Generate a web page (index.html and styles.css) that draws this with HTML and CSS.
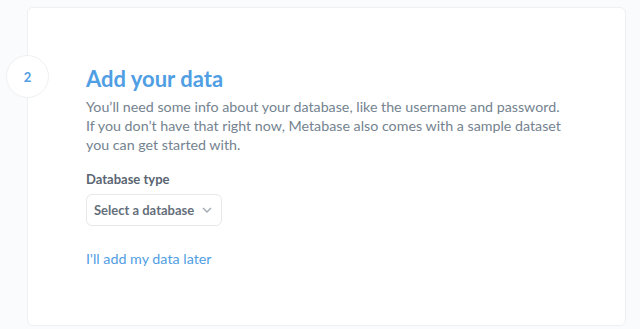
FILE: index.html
```html
<!DOCTYPE html>
<html lang="en">
<head>
    <meta charset="UTF-8">
    <meta name="viewport" content="width=device-width, initial-scale=1.0">
    <title>Add your data</title>
    <link rel="stylesheet" href="styles.css">
</head>
<body>
    <div class="step">
        <div class="step-number">2</div>
        <h2 class="step-title">Add your data</h2>
        <p class="step-text">You’ll need some info about your database, like the username and password.<br>
            If you don’t have that right now, Metabase also comes with a sample dataset<br>
            you can get started with.</p>

        <div class="form-group">
            <label class="form-label">Database type</label>
            <button class="select-btn">
                Select a database
                <svg class="chevron" width="12" height="12" viewBox="0 0 12 12">
                    <path d="M2 4 L6 8 L10 4" fill="none" stroke="#a3aab3" stroke-width="1.4"/>
                </svg>
            </button>
        </div>

        <a class="later-link" href="#">I'll add my data later</a>
    </div>
</body>
</html>
```

FILE: styles.css
```css
body{
    margin: 0;
    background-color: #f9fbfc;
    font-family: Lato, "Open Sans", sans-serif;
}
.step{
    position: relative;
    box-sizing: border-box;
    margin: 7px 14px 0 27px;
    height: 319px;
    padding: 57px 20px 0 58px;
    background-color: #fff;
    border: 1px solid #eef0f2;
    border-radius: 6px;
}
.step-number{
    position: absolute;
    left: -22px;
    top: 47px;
    box-sizing: border-box;
    width: 43px;
    height: 43px;
    border: 1px solid #eef0f2;
    border-radius: 50%;
    background-color: #fff;
    color: #509ee3;
    font-size: 13px;
    font-weight: 700;
    display: flex;
    align-items: center;
    justify-content: center;
}
.step-title{
    margin: 0;
    color: #509ee3;
    font-size: 22px;
    font-weight: 700;
    line-height: 28px;
}
.step-text{
    margin: 4px 0 0 0;
    color: #74838f;
    font-size: 14.25px;
    line-height: 19px;
}
.form-group{
    margin-top: 17px;
}
.form-label{
    display: block;
    color: #5a6572;
    font-size: 13px;
    font-weight: 700;
    margin-bottom: 7px;
}
.select-btn{
    display: flex;
    align-items: center;
    gap: 7px;
    height: 32px;
    padding: 0 8px 0 7px;
    border: 1px solid #e6e8ea;
    border-radius: 6px;
    background-color: #fff;
    color: #656f7b;
    font-family: inherit;
    font-size: 13px;
    font-weight: 700;
}
.later-link{
    display: inline-block;
    margin-top: 24px;
    color: #509ee3;
    font-size: 14.3px;
    text-decoration: none;
}
```
